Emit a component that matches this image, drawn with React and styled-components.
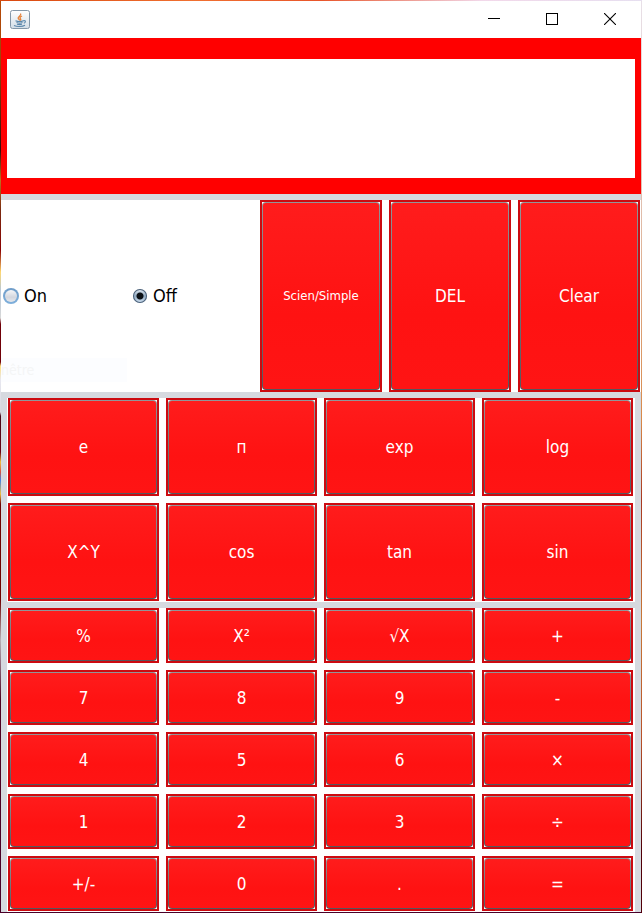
import React, { useState } from "react";
import styled, { createGlobalStyle } from "styled-components";

const GlobalStyle = createGlobalStyle`
  * { box-sizing: border-box; }
  body { margin: 0; background: #fff; }
  button, input, textarea { font: inherit; }
`;

const Desktop = styled.div`
  min-height: 100vh;
  padding: 1px;
  display: flex;
  background:
    linear-gradient(90deg, #d9480f 0%, #f07030 30%, #e8552a 50%, #f2d8ea 75%, #e6dff0 100%) top / 100% 1px no-repeat,
    linear-gradient(180deg, #b84a08 0, #a04408 60px, #3a0a08 150px, #c07020 180px, #7a2a10 210px, #8a0000 250px,
      #ffd870 272px, #b8c8d8 290px, #d8d8d8 318px, #700008 324px, #700008 362px, #ffe080 366px, #e8e8f0 380px,
      #d8d8e0 412px, #4a0818 416px, #6a0010 452px, #f0c040 462px, #d85040 472px, #4080e8 480px, #f0c040 494px,
      #700000 504px, #700000 600px, #b8b0b8 640px, #500020 700px, #4a0028 100%) left / 1px 100% no-repeat,
    linear-gradient(180deg, #e8e0e8 0, #e0c0b0 200px, #d88848 420px, #a83820 500px, #c87838 620px, #b85028 740px,
      #500008 850px, #500008 100%) right / 1px 100% no-repeat,
    #4a0028;
`;

const Window = styled.main`
  flex: 1;
  min-width: 0;
  display: flex;
  flex-direction: column;
  background: #d6d9df;
  color: #000;
  font: 17px/24px "DejaVu Sans Condensed", "Noto Sans", sans-serif;
`;

const TitleBar = styled.header`
  height: 37px;
  display: flex;
  align-items: center;
  justify-content: space-between;
  padding-left: 9px;
  background: #fff;
`;

const JavaIcon = styled.svg`
  display: block;
  width: 20px;
  height: 20px;
`;

const WindowControls = styled.div`
  display: flex;
  height: 100%;
  padding: 0 2px 2px 0;
`;

const WindowButton = styled.button`
  width: 58px;
  padding: 0;
  border: 0;
  background: transparent;
  display: grid;
  place-items: center;
  svg { display: block; }
`;

const DisplayPanel = styled.section`
  display: flex;
  padding: 21px 6px 16px;
  background: #f00;
`;

const Display = styled.textarea`
  display: block;
  width: 100%;
  height: 119px;
  padding: 8px;
  border: 0;
  outline: 0;
  resize: none;
  background: #fff;
`;

const ControlRow = styled.section`
  position: relative;
  flex: 192 1 0;
  margin: 6px 0;
  padding: 0 1px;
  display: grid;
  grid-template-columns: repeat(5, minmax(0, 1fr));
  gap: 7px;
  background: #fff;
`;

const FadingTip = styled.div`
  position: absolute;
  left: 0;
  bottom: 10px;
  width: 126px;
  height: 24px;
  overflow: hidden;
  background: #fcfdff;
  color: #f4f5f6;
  font-size: 14px;
  pointer-events: none;
`;

const Power = styled.fieldset`
  grid-column: span 2;
  min-width: 0;
  margin: 0;
  padding: 0;
  border: 0;
  display: grid;
  grid-template-columns: 1fr 1fr;
  gap: 7px;
  align-items: center;
`;

const RadioLabel = styled.label`
  display: flex;
  align-items: center;
  gap: 4px;
  font-size: 18px;
`;

const Radio = styled.input`
  appearance: none;
  flex: none;
  width: 16px;
  height: 16px;
  margin: 0 1px;
  border: 2px solid transparent;
  border-radius: 50%;
  background:
    linear-gradient(#f6f7f9, #d3d6de 60%, #e6e8ec) padding-box,
    linear-gradient(#6f9cc8, #7fb0dc) border-box;

  &:checked {
    border-width: 1px;
    background:
      radial-gradient(circle, #0c1116 0 3px, transparent 4px) padding-box,
      linear-gradient(#e8eff6, #8fa8c0 50%, #d3e4f4) padding-box;
    box-shadow: inset 0 0 0 1px #4b6078;
  }
`;

const Keypad = styled.section`
  flex: ${(p) => p.$weight} 1 0;
  margin: 0 6px;
  padding: 0 2px 1px 1px;
  display: grid;
  grid-template-columns: repeat(4, minmax(0, 1fr));
  grid-auto-rows: minmax(0, 1fr);
  gap: 7px;
  background: #fff;

  & + & { margin-top: 6px; }
`;

const KeyButton = styled.button`
  min-width: 0;
  padding: 0;
  border: 2px solid #cc0a10;
  background: #fff;
  color: #fff;
  display: grid;
  font-size: ${(p) => (p.$small ? "13px" : "17px")};
  cursor: pointer;
`;

const KeyFace = styled.span`
  display: grid;
  place-items: center;
  border: 1px solid transparent;
  border-radius: 4px;
  background:
    linear-gradient(#ff1c1c, #ff1212 60%, #ff1414) padding-box,
    linear-gradient(#929599, #55585e) border-box;
`;

function Key({ label, small, onClick }) {
  return (
    <KeyButton type="button" $small={small} onClick={onClick}>
      <KeyFace>{label}</KeyFace>
    </KeyButton>
  );
}

const scientificKeys = ["e", "п", "exp", "log", "X^Y", "cos", "tan", "sin"];
const basicKeys = [
  "%", "X²", "√X", "+",
  "7", "8", "9", "-",
  "4", "5", "6", "×",
  "1", "2", "3", "÷",
  "+/-", "0", ".", "=",
];

export default function App() {
  const [text, setText] = useState("");
  const [power, setPower] = useState("off");
  const append = (key) => setText((t) => t + key);

  return (
    <>
      <GlobalStyle />
      <Desktop>
        <Window>
          <TitleBar>
            <JavaIcon viewBox="0 0 20 20" aria-hidden="true">
              <defs>
                <linearGradient id="tile" x1="0" y1="0" x2="0" y2="1">
                  <stop offset="0" stopColor="#fff" />
                  <stop offset="1" stopColor="#d3dde6" />
                </linearGradient>
              </defs>
              <rect x="0.5" y="0.5" width="19" height="18" rx="2" fill="url(#tile)" stroke="#8497a8" />
              <path d="M10.5 3.5C12 5.5 7.5 6.5 8.2 8.2c.3 1 1.3 1.3 1.6 2.3M12 6c-2 1-2.5 1.8-1.6 2.8.7.8.3 1.3-.2 1.7" fill="none" stroke="#e5823a" strokeWidth="1.3" />
              <path d="M5.5 10.7c2 .8 6 .8 8 0M6.5 12.5c2 .7 4.5.7 6 0M7 14.2c1.5.5 3.5.5 5 0M4 15.5c3 1.4 8.5 1.3 11-.2M13.5 10.8c2-.8 3 1.2.3 2.4" fill="none" stroke="#5b87ab" strokeWidth="1.1" />
            </JavaIcon>
            <WindowControls>
              <WindowButton type="button" aria-label="Minimize">
                <svg width="12" height="12" viewBox="0 0 12 12" shapeRendering="crispEdges"><path d="M0 5.5h12" stroke="#000" /></svg>
              </WindowButton>
              <WindowButton type="button" aria-label="Maximize">
                <svg width="12" height="12" viewBox="0 0 12 12" shapeRendering="crispEdges"><rect x="0.5" y="0.5" width="11" height="11" fill="none" stroke="#000" /></svg>
              </WindowButton>
              <WindowButton type="button" aria-label="Close">
                <svg width="12" height="12" viewBox="0 0 12 12"><path d="M0 0l12 12M12 0L0 12" stroke="#000" strokeWidth="1.1" /></svg>
              </WindowButton>
            </WindowControls>
          </TitleBar>

          <DisplayPanel>
            <Display aria-label="Display" value={text} onChange={(e) => setText(e.target.value)} />
          </DisplayPanel>

          <ControlRow>
            <FadingTip aria-hidden="true">nêtre</FadingTip>
            <Power aria-label="Power">
              <RadioLabel>
                <Radio type="radio" name="power" checked={power === "on"} onChange={() => setPower("on")} />
                On
              </RadioLabel>
              <RadioLabel>
                <Radio type="radio" name="power" checked={power === "off"} onChange={() => setPower("off")} />
                Off
              </RadioLabel>
            </Power>
            <Key label="Scien/Simple" small />
            <Key label="DEL" onClick={() => setText((t) => t.slice(0, -1))} />
            <Key label="Clear" onClick={() => setText("")} />
          </ControlRow>

          <Keypad $weight={203}>
            {scientificKeys.map((k) => <Key key={k} label={k} onClick={() => append(k)} />)}
          </Keypad>
          <Keypad $weight={303}>
            {basicKeys.map((k) => <Key key={k} label={k} onClick={() => append(k)} />)}
          </Keypad>
        </Window>
      </Desktop>
    </>
  );
}
